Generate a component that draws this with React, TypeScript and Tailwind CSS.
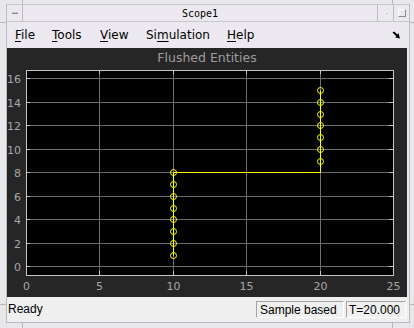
import React from "react";

// plot mapping (svg coords, svg starts at page x=7, y=69)
const xs = (v: number) => Math.round(19 + v * 14.68);
const ys = (v: number) => Math.round(198.3 - v * 11.75);

const Plot: React.FC = () => {
  const L = 19, R = 386, T = 2, B = 207;
  const xTicks = [0, 5, 10, 15, 20, 25];
  const yTicks = [0, 2, 4, 6, 8, 10, 12, 14, 16];
  const left = [1, 2, 3, 4, 5, 6, 7, 8];
  const right = [9, 10, 11, 12, 13, 14, 15];

  return (
    <svg width={400} height={229} className="block" style={{ fontFamily: "'DejaVu Sans', sans-serif" }}>
      <rect x={L + 0.5} y={T + 0.5} width={R - L} height={B - T} fill="#000" />
      {/* grid */}
      {xTicks.slice(1, -1).map((v) => (
        <line key={"gx" + v} x1={xs(v) + 0.5} x2={xs(v) + 0.5} y1={T} y2={B} stroke="#6e6e6e" />
      ))}
      {yTicks.map((v) => (
        <line key={"gy" + v} x1={L} x2={R} y1={ys(v) + 0.5} y2={ys(v) + 0.5} stroke="#6e6e6e" />
      ))}
      {/* ticks */}
      {xTicks.slice(1, -1).map((v) => (
        <g key={"tx" + v} stroke="#c4c4c4">
          <line x1={xs(v) + 0.5} x2={xs(v) + 0.5} y1={B} y2={B - 4} />
          <line x1={xs(v) + 0.5} x2={xs(v) + 0.5} y1={T} y2={T + 4} />
        </g>
      ))}
      {yTicks.map((v) => (
        <g key={"ty" + v} stroke="#c4c4c4">
          <line x1={L} x2={L + 4} y1={ys(v) + 0.5} y2={ys(v) + 0.5} />
          <line x1={R} x2={R - 4} y1={ys(v) + 0.5} y2={ys(v) + 0.5} />
        </g>
      ))}
      <rect x={L + 0.5} y={T + 0.5} width={R - L} height={B - T} fill="none" stroke="#c4c4c4" />
      {/* data */}
      <path
        d={`M${xs(10) + 0.5} ${ys(1) + 0.5} V${ys(8) + 0.5} H${xs(20) + 0.5} V${ys(15) + 0.5}`}
        fill="none"
        stroke="#ffff00"
      />
      {left.map((v) => (
        <circle key={"l" + v} cx={xs(10) + 0.5} cy={ys(v) + 0.5} r={3} fill="none" stroke="#ffff00" />
      ))}
      {right.map((v) => (
        <circle key={"r" + v} cx={xs(20) + 0.5} cy={ys(v) + 0.5} r={3} fill="none" stroke="#ffff00" />
      ))}
      {/* labels */}
      {yTicks.map((v) => (
        <text key={"ly" + v} x={14} y={ys(v) + 4.5} textAnchor="end" fontSize={11} fill="#a6a6a6">
          {v}
        </text>
      ))}
      {xTicks.map((v) => (
        <text key={"lx" + v} x={xs(v) + 0.5} y={222} textAnchor="middle" fontSize={11} fill="#a6a6a6">
          {v}
        </text>
      ))}
    </svg>
  );
};

const menus: { pre: string; u: string; post: string; w: string }[] = [
  { pre: "", u: "F", post: "ile", w: "w-[37px]" },
  { pre: "", u: "T", post: "ools", w: "w-[48px]" },
  { pre: "", u: "V", post: "iew", w: "w-[46px]" },
  { pre: "Si", u: "m", post: "ulation", w: "w-[81px]" },
  { pre: "", u: "H", post: "elp", w: "w-[40px]" },
];

export default function App() {
  return (
    <div className="relative w-[414px] h-[328px] overflow-hidden bg-[#e8e7ec] pt-[4px] pl-[6px]">
      {/* frame corner marks */}
      <div className="absolute left-[22px] top-0 w-px h-[4px] bg-[#b8b8b8]" />
      <div className="absolute left-[392px] top-0 w-px h-[4px] bg-[#b8b8b8]" />
      <div className="absolute left-[22px] bottom-0 w-px h-[6px] bg-[#b8b8b8]" />
      <div className="absolute left-[392px] bottom-0 w-px h-[6px] bg-[#b8b8b8]" />
      <div className="absolute left-0 top-[22px] w-[6px] h-px bg-[#b8b8b8]" />
      <div className="absolute left-0 top-[304px] w-[6px] h-px bg-[#b8b8b8]" />
      <div className="absolute right-0 top-[22px] w-[5px] h-px bg-[#b8b8b8]" />
      <div className="absolute right-0 top-[304px] w-[5px] h-px bg-[#b8b8b8]" />

      <div className="flex flex-col w-[404px] h-[319px] border border-[#bcbcbc] border-t-[#c6c6c6]">
        {/* title bar */}
        <div className="flex h-[17px] border-b border-[#c8c8c8] bg-[#ebe9ef]">
          <div className="w-[16px] h-full border-r border-[#bcbcbc] flex items-center justify-center">
            <div className="w-[6px] h-[2px] bg-[#c8c8c8] border-b border-[#8c8c8c]" />
          </div>
          <div className="flex-1 flex items-center justify-center text-[10px] text-black" style={{ fontFamily: "'DejaVu Sans Mono', monospace" }}>
            Scope1
          </div>
          <div className="w-[16px] h-full border-l border-[#bcbcbc] flex items-center justify-center">
            <div className="w-[2px] h-[2px] bg-[#9a9a9a] border-t border-l border-white" />
          </div>
          <div className="w-[16px] h-full border-l border-[#bcbcbc] flex items-center justify-center">
            <div className="w-[8px] h-[8px] border border-t-white border-l-white border-b-[#8c8c8c] border-r-[#8c8c8c]" />
          </div>
        </div>

        {/* menu bar */}
        <div
          className="flex items-center h-[26px] pl-[8px] pr-[6px] bg-[#ebe9ef] text-[12px] text-black"
          style={{ fontFamily: "'DejaVu Sans', sans-serif" }}
        >
          <div className="flex">
            {menus.map((m) => (
              <span key={m.pre + m.u + m.post} className={m.w}>
                {m.pre}
                <span className="underline underline-offset-2">{m.u}</span>
                {m.post}
              </span>
            ))}
          </div>
          <svg width="9" height="8" viewBox="0 0 9 8" className="ml-auto mr-[2px]">
            <path d="M0.5 1.5 L2 0.5 L5.5 3.5 L6.5 2 L8 7.5 L3 6.5 L4.5 5.5 Z" fill="#000" />
          </svg>
        </div>

        {/* scope panel */}
        <div className="flex flex-col w-[400px] h-[249px] bg-[#262626]">
          <div
            className="h-[20px] flex items-center justify-center text-[12.5px] text-[#9c9c9c]"
            style={{ fontFamily: "'DejaVu Sans', sans-serif" }}
          >
            Flushed Entities
          </div>
          <Plot />
        </div>

        {/* status bar */}
        <div
          className="flex items-center flex-1 pl-[1px] pr-[3px] bg-[#efefef] text-[12px] text-black"
          style={{ fontFamily: "'Liberation Sans', Arial, sans-serif" }}
        >
          <span className="flex-1 -mt-[1px]">Ready</span>
          <div className="w-[88px] h-[17px] flex items-center pl-[3px] border border-t-[#a4a4a4] border-l-[#a4a4a4] border-b-white border-r-white">
            Sample based
          </div>
          <div className="w-[60px] h-[17px] ml-[2px] flex items-center pl-[2px] border border-t-[#a4a4a4] border-l-[#a4a4a4] border-b-white border-r-white">
            T=20.000
          </div>
        </div>
      </div>
    </div>
  );
}
